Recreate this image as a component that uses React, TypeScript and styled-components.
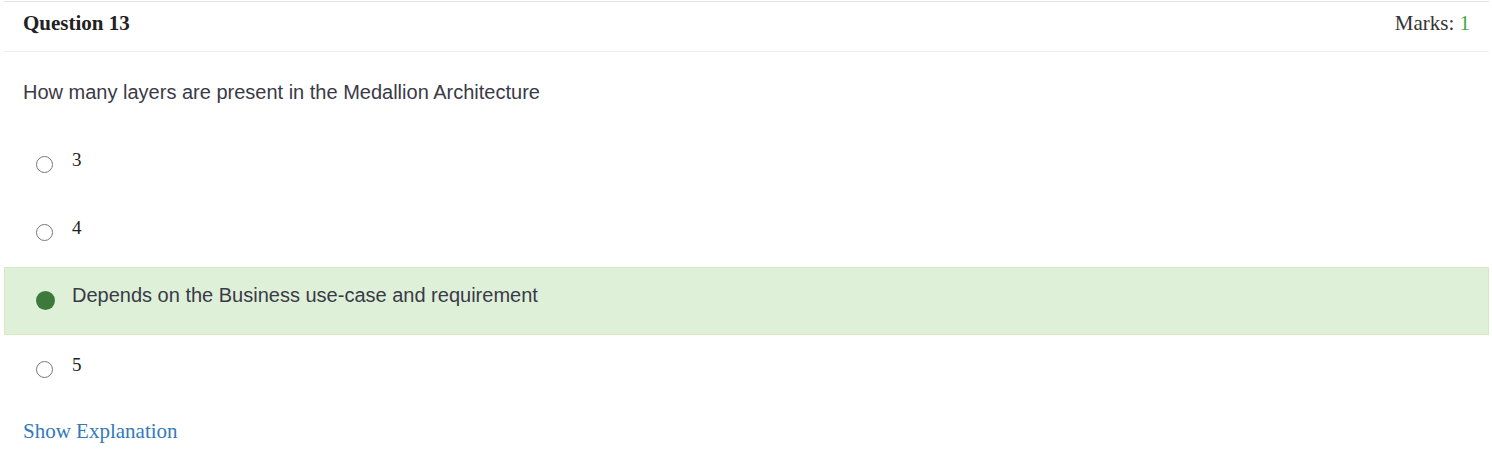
import React from "react";
import styled, { createGlobalStyle } from "styled-components";

const Global = createGlobalStyle`
  html, body { margin: 0; padding: 0; background: #fff; }
  body { font-family: "Liberation Serif", "Times New Roman", serif; }
`;

const Page = styled.div`
  display: flex;
  padding: 1px 0 0 4px;
  width: 1492px;
  box-sizing: border-box;
`;

const Card = styled.div`
  width: 1485px;
  border-top: 1px solid #e3e3e3;
  background: #fff;
`;

const Header = styled.div`
  display: flex;
  justify-content: space-between;
  align-items: center;
  height: 49px;
  padding: 0 19px;
  border-bottom: 1px solid #eeeeee;
`;

const Title = styled.div`
  font-family: "Liberation Serif", serif;
  font-weight: bold;
  font-size: 21px;
  color: #222;
  margin-top: -6px;
`;

const Marks = styled.div`
  font-family: "Liberation Serif", serif;
  font-size: 21px;
  color: #333;
  margin-top: -6px;
  span { color: #3fa83f; }
`;

const Body = styled.div`
  padding: 29px 0 0 0;
`;

const QuestionText = styled.div`
  font-family: "Liberation Sans", Arial, sans-serif;
  font-size: 20px;
  color: #3a3a48;
  padding-left: 19px;
  height: 49px;
`;

const Options = styled.div`
  display: flex;
  flex-direction: column;
`;

const Option = styled.div<{ $selected?: boolean }>`
  display: flex;
  align-items: flex-start;
  height: 68px;
  box-sizing: border-box;
  padding: ${(p) => (p.$selected ? "16px 0 0 31px" : "22px 0 0 32px")};
  background: ${(p) => (p.$selected ? "#dff0d8" : "transparent")};
  border: ${(p) => (p.$selected ? "1px solid #d6e9c6" : "none")};
  margin-top: ${(p) => (p.$selected ? 1 : 0)}px;
`;

const Radio = styled.span`
  width: 17px;
  height: 17px;
  box-sizing: border-box;
  border: 1.8px solid #777;
  border-radius: 50%;
  margin-top: 4px;
  flex: none;
`;

const Dot = styled.span`
  width: 19px;
  height: 19px;
  border-radius: 50%;
  background: #3c7a3c;
  margin-top: 7px;
  flex: none;
`;

const Label = styled.span<{ $sans?: boolean }>`
  font-family: ${(p) => (p.$sans ? '"Liberation Sans", Arial, sans-serif' : '"Liberation Serif", serif')};
  font-size: ${(p) => (p.$sans ? 20 : 19)}px;
  color: ${(p) => (p.$sans ? "#3a3a48" : "#222")};
  margin-left: ${(p) => (p.$sans ? 17 : 19)}px;
  line-height: 22px;
  margin-top: ${(p) => (p.$sans ? 0 : -3)}px;
`;

const Explain = styled.a`
  display: block;
  font-family: "Liberation Serif", serif;
  font-size: 21px;
  color: #337ab7;
  padding: 16px 0 0 19px;
  text-decoration: none;
  cursor: pointer;
`;

export default function App() {
  return (
    <>
      <Global />
      <Page>
        <Card>
          <Header>
            <Title>Question 13</Title>
            <Marks>
              Marks: <span>1</span>
            </Marks>
          </Header>
          <Body>
            <QuestionText>How many layers are present in the Medallion Architecture</QuestionText>
            <Options>
              <Option>
                <Radio />
                <Label>3</Label>
              </Option>
              <Option>
                <Radio />
                <Label>4</Label>
              </Option>
              <Option $selected>
                <Dot />
                <Label $sans>Depends on the Business use-case and requirement</Label>
              </Option>
              <Option>
                <Radio />
                <Label>5</Label>
              </Option>
            </Options>
            <Explain>Show Explanation</Explain>
          </Body>
        </Card>
      </Page>
    </>
  );
}
